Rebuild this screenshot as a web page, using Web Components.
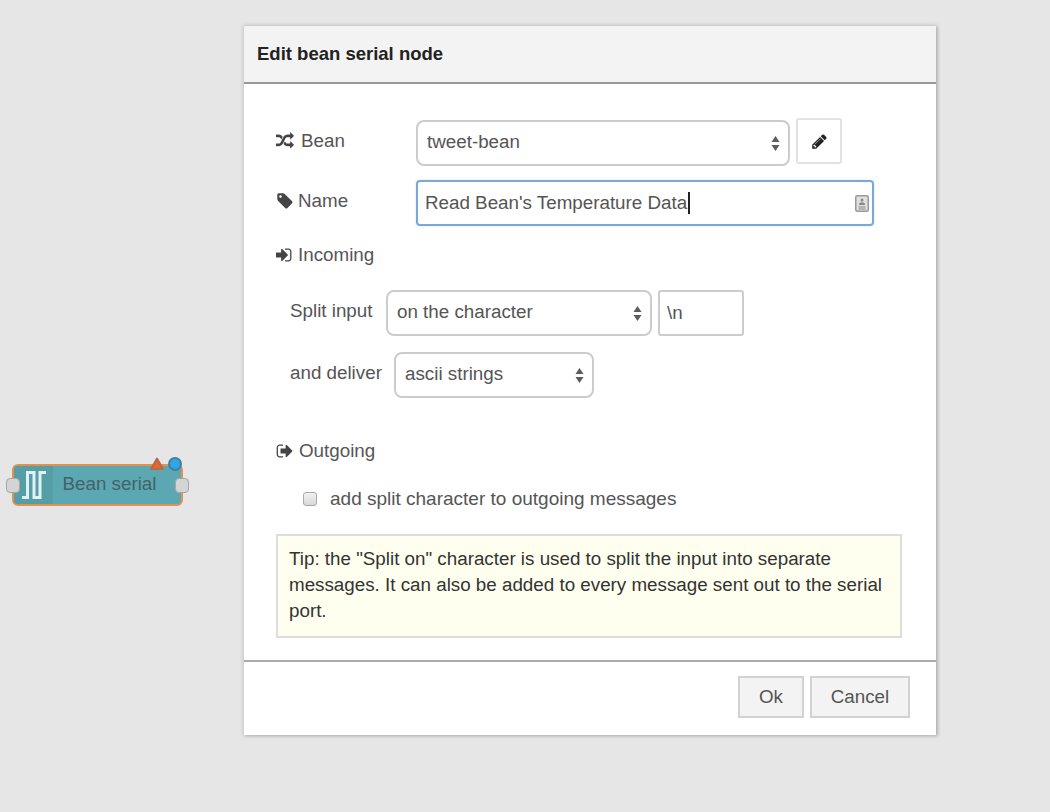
<!DOCTYPE html>
<html>
<head>
<meta charset="utf-8">
<title>Edit bean serial node</title>
<style>
  html, body { margin: 0; height: 100%; }
  body {
    background: #e6e6e6;
    font-family: "Liberation Sans", Arial, sans-serif;
    color: #555;
    overflow: hidden;
    padding: 26px 0 0 244px;
    box-sizing: border-box;
    height: 812px;
  }
</style>
</head>
<body>
<bean-node label="Bean serial"></bean-node>

<edit-dialog heading="Edit bean serial node">
  <form-row>
    <row-label slot="label" icon="random" iw="25" width="140">Bean</row-label>
    <fake-select width="374">tweet-bean</fake-select>
    <icon-button></icon-button>
  </form-row>
  <form-row style="margin-top:14px">
    <row-label slot="label" icon="tag" iw="22" width="140">Name</row-label>
    <text-field width="458" focused caret book>Read Bean's Temperature Data</text-field>
  </form-row>
  <row-label block icon="sign-in" iw="22" style="margin-top:17px">Incoming</row-label>
  <form-row indent style="margin-top:23px">
    <row-label slot="label" width="96">Split input</row-label>
    <fake-select width="266">on the character</fake-select>
    <text-field width="86">\n</text-field>
  </form-row>
  <form-row indent style="margin-top:16px">
    <row-label slot="label" width="104">and deliver</row-label>
    <fake-select width="200">ascii strings</fake-select>
  </form-row>
  <row-label block icon="sign-out" iw="23" style="margin-top:41px">Outgoing</row-label>
  <check-row style="margin-top:24px">add split character to outgoing messages</check-row>
  <tip-box style="margin-top:23px">Tip: the "Split on" character is used to split the input into separate messages. It can also be added to every message sent out to the serial port.</tip-box>
  <dlg-button slot="footer" width="66">Ok</dlg-button>
  <dlg-button slot="footer" width="100">Cancel</dlg-button>
</edit-dialog>

<script>
const FONT_SIZE = "18.8px";

const ICONS = {
	random: "M666 481q-60 92-137 273-22-45-37-72.5t-40.5-63.5-51-56.5-63-35-81.5-14.5h-224q-14 0-23-9t-9-23v-192q0-14 9-23t23-9h224q250 0 410 225zm1126 799q0 14-9 23l-320 320q-9 9-23 9-13 0-22.5-9.5t-9.5-22.5v-192q-32 0-85 .5t-81 1-73-1-71-5-64-10.5-63-18.5-58-28.5-59-40-55-53.5-56-69.5q59-93 136-273 22 45 37 72.5t40.5 63.5 51 56.5 63 35 81.5 14.5h256v-192q0-14 9-23t23-9q12 0 24 10l319 319q9 9 9 23zm0-896q0 14-9 23l-320 320q-9 9-23 9-13 0-22.5-9.5t-9.5-22.5v-192h-256q-48 0-87 15t-69 45-51 61.5-45 77.5q-32 62-78 171-29 66-49.5 111t-54 105-64 100-74 83-90 68.5-106.5 42-128 16.5h-224q-14 0-23-9t-9-23v-192q0-14 9-23t23-9h224q48 0 87-15t69-45 51-61.5 45-77.5q32-62 78-171 29-66 49.5-111t54-105 64-100 74-83 90-68.5 106.5-42 128-16.5h256v-192q0-14 9-23t23-9q12 0 24 10l319 319q9 9 9 23z",
	tag: "M576 448q0-53-37.5-90.5t-90.5-37.5-90.5 37.5-37.5 90.5 37.5 90.5 90.5 37.5 90.5-37.5 37.5-90.5zm1067 576q0 53-37 90l-491 492q-39 37-91 37-53 0-90-37l-715-716q-38-37-64.5-101t-26.5-117v-416q0-52 38-90t90-38h416q53 0 117 26.5t102 64.5l715 714q37 39 37 91z",
	"sign-in": "M1184 896q0 26-19 45l-544 544q-19 19-45 19t-45-19-19-45v-288h-448q-26 0-45-19t-19-45v-384q0-26 19-45t45-19h448v-288q0-26 19-45t45-19 45 19l544 544q19 19 19 45zm352-352v704q0 119-84.5 203.5t-203.5 84.5h-320q-13 0-22.5-9.5t-9.5-22.5q0-4-1-20t-.5-26.5 3-23.5 10-19.5 20.5-6.5h320q66 0 113-47t47-113v-704q0-66-47-113t-113-47h-312l-11.5-1-11.5-3-8-5.5-7-9-2-13.5q0-4-1-20t-.5-26.5 3-23.5 10-19.5 20.5-6.5h320q119 0 203.5 84.5t84.5 203.5z",
	"sign-out": "M704 1440q0 4 1 20t.5 26.5-3 23.5-10 19.5-20.5 6.5h-320q-119 0-203.5-84.5t-84.5-203.5v-704q0-119 84.5-203.5t203.5-84.5h320q13 0 22.5 9.5t9.5 22.5q0 4 1 20t.5 26.5-3 23.5-10 19.5-20.5 6.5h-320q-66 0-113 47t-47 113v704q0 66 47 113t113 47h312l11.5 1 11.5 3 8 5.5 7 9 2 13.5zm928-544q0 26-19 45l-544 544q-19 19-45 19t-45-19-19-45v-288h-448q-26 0-45-19t-19-45v-384q0-26 19-45t45-19h448v-288q0-26 19-45t45-19 45 19l544 544q19 19 19 45z",
	pencil: "M491 1536l91-91-235-235-91 91v107h128v128h107zm523-928q0-22-22-22-10 0-17 7l-542 542q-7 7-7 17 0 22 22 22 10 0 17-7l542-542q7-7 7-17zm-54-192l416 416-832 832h-416v-416zm683 96q0 53-37 90l-166 166-416-416 166-165q36-38 90-38 53 0 91 38l235 234q37 39 37 91z",
};

const faIcon = (name, size, color) =>
	`<svg width="${size}" height="${size}" viewBox="0 0 1792 1792" fill="${color}" aria-hidden="true"><path d="${ICONS[name]}"/></svg>`;

// base class, just saves repeating attachShadow everywhere
class ShadowEl extends HTMLElement {
	constructor() {
		super();
		this.attachShadow({ mode: "open" });
	}
}

class BeanNode extends ShadowEl {
	connectedCallback() {
		const label = this.getAttribute("label");
		this.shadowRoot.innerHTML = `
      <style>
        :host{ position:absolute; left:6px; top:457px; width:183px; height:50px; display:block; }
        .body{
          position:absolute; left:6px; top:7px; width:171px; height:42px; box-sizing:border-box;
          background:#5ba8b2; border:2.5px solid #e2924c; border-radius:6px; overflow:hidden;
          display:flex; align-items:center;
        }
        .ico{ width:39px; height:100%; background:#559ea6; display:flex; align-items:center; justify-content:center; flex:none; }
        .txt{ flex:1; text-align:center; font-size:${FONT_SIZE}; color:#44626a; padding-bottom:2px; padding-right:15px; white-space:nowrap; }
        .port{ position:absolute; top:21px; width:14px; height:15px; background:#d4d4d4; border:1px solid #a6a6a6; border-radius:4px; box-sizing:border-box; }
        .port.l{ left:0; }
        .port.r{ left:169px; }
        .warn{ position:absolute; left:144px; top:0; }
        .dot{ position:absolute; left:162px; top:0; width:14px; height:14px; box-sizing:border-box; border-radius:50%; background:#2ea6e8; border:2px solid #467f9c; }
      </style>
      <div class="body">
        <div class="ico">
          <svg width="24" height="28" viewBox="0 0 24 28" fill="none" stroke="#e4f1f2" stroke-width="3"><path d="M0 26.500H5.500V1.500H12V26.500H18V1.500H24"/></svg>
        </div>
        <div class="txt">${label}</div>
      </div>
      <div class="port l"></div>
      <div class="port r"></div>
      <svg class="warn" width="14" height="13" viewBox="0 0 14 13"><path d="M7 1.500L13 12H1Z" fill="#e2672c" stroke="#b9694a" stroke-width="2" stroke-linejoin="round"/></svg>
      <div class="dot"></div>
    `;
	}
}

class EditDialog extends ShadowEl {
	connectedCallback() {
		this.shadowRoot.innerHTML = `
      <style>
        :host{ display:block; width:692px; height:709px; background:#fff; box-shadow:0 0 4px 1px rgba(0,0,0,.14), 2px 1px 3px rgba(0,0,0,.14); }
        header{ height:58px; box-sizing:border-box; background:#f3f3f3; border-bottom:2px solid #999; padding:0 13px; display:flex; align-items:center; font-weight:700; font-size:18.5px; color:#222; }
        .main{ height:578px; box-sizing:border-box; padding:36px 32px 0; border-bottom:2px solid #aaa; }
        footer{ height:73px; box-sizing:border-box; padding:14px 26px 0 0; display:flex; justify-content:flex-end; gap:6px; }
      </style>
      <header>${this.getAttribute("heading")}</header>
      <div class="main"><slot></slot></div>
      <footer><slot name="footer"></slot></footer>
    `;
	}
}

class FormRow extends ShadowEl {
	connectedCallback() {
		this.shadowRoot.innerHTML = `
      <style>
        :host{ display:flex; align-items:flex-start; gap:6px; }
        :host([indent]){ padding-left:14px; }
      </style>
      <slot name="label"></slot>
      <slot></slot>
    `;
	}
}

class RowLabel extends ShadowEl {
	connectedCallback() {
		const icon = this.getAttribute("icon");
		const width = this.getAttribute("width");
		const iw = this.getAttribute("iw");
		// 46px tall to line up with the controls, label sits a bit above their centre
		this.shadowRoot.innerHTML = `
      <style>
        :host{ display:flex; align-items:center; font-size:${FONT_SIZE}; color:#555; flex:none; margin-right:-6px; height:46px; padding-bottom:4px; box-sizing:border-box; white-space:nowrap; ${width ? `width:${width}px;` : ""} }
        :host([block]){ height:24px; padding-bottom:0; margin-right:0; }
        .i{ flex:none; width:${iw}px; display:flex; }
      </style>
      ${icon ? `<span class="i">${faIcon(icon, 18, "#444")}</span>` : ""}<slot></slot>
    `;
	}
}

class FakeSelect extends ShadowEl {
	connectedCallback() {
		this.shadowRoot.innerHTML = `
      <style>
        :host{ display:flex; align-items:center; flex:none; width:${this.getAttribute("width")}px; height:46px; box-sizing:border-box; border:2px solid #ccc; border-radius:8px; background:#fff; padding:0 8px 0 9px; font-size:${FONT_SIZE}; color:#555; justify-content:space-between; }
        span{ padding-bottom:2px; }
        svg{ flex:none; }
      </style>
      <span><slot></slot></span>
      <svg width="9" height="17" viewBox="0 0 9 17" fill="#5c5c5c"><path d="M4.500 1L8.500 7H.5Z"/><path d="M4.500 16L8.500 10H.5Z"/></svg>
    `;
	}
}

class TextField extends ShadowEl {
	connectedCallback() {
		const caret = this.hasAttribute("caret") ? `<i></i>` : "";
		const book = this.hasAttribute("book")
			? `<svg class="book" width="14" height="17" viewBox="0 0 14 17"><rect x="0.750" y="0.750" width="12.500" height="15.500" rx="1.500" fill="#e0e0e0" stroke="#999" stroke-width="1.500"/><path d="M7 3.500a1.500 1.500 0 1 1 0 3 1.500 1.500 0 1 1 0-3zM4 10c0-2 1-2.800 3-2.800s3 .8 3 2.800zM3.500 11.500h7v1h-7zM3.500 13.500h7v1h-7z" fill="#888"/></svg>`
			: "";
		this.shadowRoot.innerHTML = `
      <style>
        :host{ display:flex; align-items:center; flex:none; width:${this.getAttribute("width")}px; height:46px; box-sizing:border-box; border:2px solid #ccc; border-radius:3px; background:#fff; padding:0 3px 0 7px; font-size:${FONT_SIZE}; color:#555; }
        :host([focused]){ border-color:#7aa8dc; border-radius:4px; box-shadow:0 0 3px rgba(122,168,220,.3); }
        i{ display:inline-block; width:1.5px; height:22px; background:#222; margin-left:1px; }
        .book{ margin-left:auto; flex:none; }
      </style>
      <span><slot></slot></span>${caret}${book}
    `;
	}
}

class IconButton extends ShadowEl {
	connectedCallback() {
		this.shadowRoot.innerHTML = `
      <style>
        :host{ display:flex; align-items:center; justify-content:center; flex:none; width:46px; height:46px; box-sizing:border-box; border:2px solid #e2e2e2; border-radius:3px; background:#fff; margin-top:-2px; }
      </style>
      ${faIcon("pencil", 17, "#222")}
    `;
	}
}

class CheckRow extends ShadowEl {
	connectedCallback() {
		this.shadowRoot.innerHTML = `
      <style>
        :host{ display:flex; align-items:center; height:24px; padding-left:27px; font-size:19px; color:#555; white-space:nowrap; }
        .box{ width:14px; height:14px; box-sizing:border-box; border:1px solid #aaa; border-radius:3px; background:linear-gradient(#f2f2f2,#d8d8d8); margin-right:13px; flex:none; }
      </style>
      <div class="box"></div><slot></slot>
    `;
	}
}

class TipBox extends ShadowEl {
	connectedCallback() {
		this.shadowRoot.innerHTML = `
      <style>
        :host{ display:block; box-sizing:border-box; height:104px; width:626px; background:#ffffef; border:2px solid #ddd; padding:10px 11px; font-size:${FONT_SIZE}; line-height:26px; color:#333; }
      </style>
      <slot></slot>
    `;
	}
}

class DlgButton extends ShadowEl {
	connectedCallback() {
		this.shadowRoot.innerHTML = `
      <style>
        :host{ display:flex; align-items:center; justify-content:center; width:${this.getAttribute("width")}px; height:42px; box-sizing:border-box; border:2px solid #d2d2d2; background:#f3f3f3; font-size:${FONT_SIZE}; color:#555; }
      </style>
      <slot></slot>
    `;
	}
}

customElements.define("bean-node", BeanNode);
customElements.define("edit-dialog", EditDialog);
customElements.define("form-row", FormRow);
customElements.define("row-label", RowLabel);
customElements.define("fake-select", FakeSelect);
customElements.define("text-field", TextField);
customElements.define("icon-button", IconButton);
customElements.define("check-row", CheckRow);
customElements.define("tip-box", TipBox);
customElements.define("dlg-button", DlgButton);
</script>
</body>
</html>
